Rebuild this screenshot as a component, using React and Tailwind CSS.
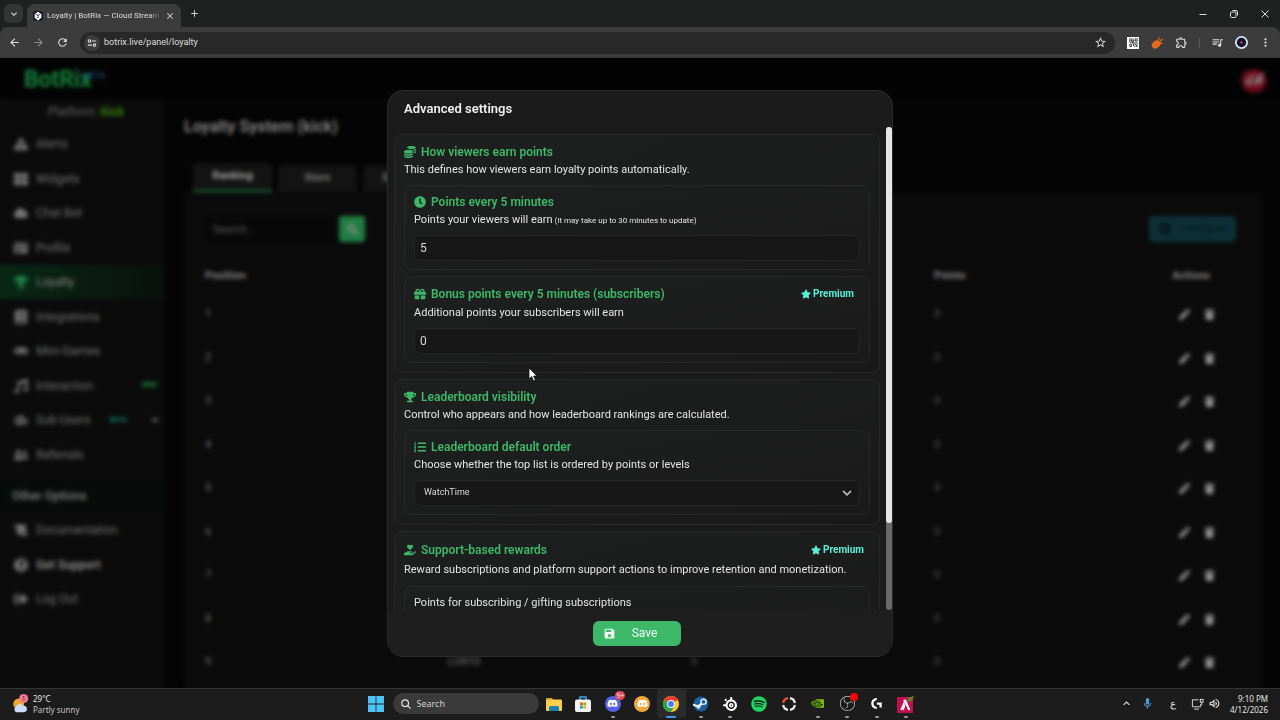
import React from "react";
import {
  FaExclamationTriangle, FaThLarge, FaCloud, FaIdCard, FaTrophy, FaBook, FaGamepad, FaMusic, FaUsersCog,
  FaUserFriends, FaScroll, FaQuestionCircle, FaSignOutAlt, FaCaretDown, FaClock, FaGift, FaListOl,
  FaHandHoldingHeart, FaStar, FaSearch, FaPen, FaTrash, FaCoins, FaSpotify, FaDiscord, FaCog,
} from "react-icons/fa";
import {
  MdArrowBack, MdArrowForward, MdRefresh, MdStarOutline, MdOutlineExtension, MdQueueMusic, MdMoreVert,
  MdClose, MdAdd, MdKeyboardArrowDown, MdKeyboardArrowUp, MdSave, MdOutlineMic, MdOutlineVolumeUp, MdQrCode2,
} from "react-icons/md";
import { SiObsstudio, SiSteelseries, SiNvidia, SiLogitechg } from "react-icons/si";

const NAV = [
  { label: "Alerts", Icon: FaExclamationTriangle },
  { label: "Widgets", Icon: FaThLarge },
  { label: "Chat Bot", Icon: FaCloud },
  { label: "Profile", Icon: FaIdCard },
  { label: "Loyalty", Icon: FaTrophy, active: true },
  { label: "Integrations", Icon: FaBook },
  { label: "Mini-Games", Icon: FaGamepad },
  { label: "Interaction", Icon: FaMusic, badge: "NEW", badgeClass: "ml-auto pr-2 text-[#22c55e]" },
  { label: "Sub-Users", Icon: FaUsersCog, badge: "BETA", badgeClass: "ml-auto text-[#14b88a]", caret: true },
  { label: "Referrals", Icon: FaUserFriends },
];

const OTHER = [
  { label: "Documentation", Icon: FaScroll },
  { label: "Get Support", Icon: FaQuestionCircle, strong: true },
  { label: "Log Out", Icon: FaSignOutAlt },
];

const ROWS = ["1", "2", "3", "4", "5", "6", "7", "8", "9"];

function BrowserChrome() {
  return (
    <header className="shrink-0 bg-[#1f2120] font-[Roboto,sans-serif] text-[#dedede]">
      <div className="flex h-[27px] items-end pl-1">
        <button aria-label="Search tabs" className="mb-1 grid size-[19px] place-items-center rounded-md bg-[#343635]">
          <MdKeyboardArrowDown className="size-3" />
        </button>
        <div className="ml-1 flex h-[23px] w-[154px] items-center rounded-t-lg bg-[#3c3c3c] px-1.5">
          <svg viewBox="0 0 12 12" className="size-[10px] shrink-0">
            <rect width="12" height="12" rx="3" fill="#151a30" />
            <path d="M2 4l4-3 4 3v4l-4 3.500-4-3.500z" fill="#fff" />
            <path d="M4 4l2 1.500 2-1.500M5 8.500l1.500-2" stroke="#151a30" strokeWidth="1.200" fill="none" />
          </svg>
          <span className="ml-1 min-w-0 flex-1 overflow-hidden text-[8px] whitespace-nowrap [mask-image:linear-gradient(90deg,#000_90%,transparent)]">
            Loyalty | BotRix — Cloud Stream
          </span>
          <button aria-label="Close tab" className="ml-1"><MdClose className="size-[10px]" /></button>
        </div>
        <button aria-label="New tab" className="mb-2 ml-2"><MdAdd className="size-[11px]" /></button>
        <div className="mb-2 ml-auto flex items-center gap-[21px] pr-2.5">
          <button aria-label="Minimize">
            <svg viewBox="0 0 10 10" className="size-[10px]"><path d="M1.500 5.500h7" stroke="currentColor" /></svg>
          </button>
          <button aria-label="Restore">
            <svg viewBox="0 0 10 10" className="size-[10px]" fill="none" stroke="currentColor">
              <rect x="1.500" y="3" width="5.500" height="5.500" rx="1" />
              <path d="M3.500 1.500h3.500a1.500 1.500 0 0 1 1.500 1.500v3.500" />
            </svg>
          </button>
          <button aria-label="Close">
            <svg viewBox="0 0 10 10" className="size-[10px]"><path d="M1.500 1.500l7 7M8.500 1.500l-7 7" stroke="currentColor" /></svg>
          </button>
        </div>
      </div>
      <div className="flex h-[31px] items-center rounded-t-lg bg-[#3c3c3c] px-2">
        <div className="flex items-center gap-[11px]">
          <button aria-label="Back"><MdArrowBack className="size-[13px]" /></button>
          <button aria-label="Forward" className="text-[#8a8a8a]"><MdArrowForward className="size-[13px]" /></button>
          <button aria-label="Reload"><MdRefresh className="size-[13px]" /></button>
        </div>
        <div className="ml-[11px] flex h-[22px] flex-1 items-center rounded-full bg-[#282828] pr-2 pl-1">
          <span className="grid size-4 place-items-center rounded-full bg-[#3c3c3c]">
            <svg viewBox="0 0 12 12" className="size-[10px]" fill="none" stroke="currentColor" strokeWidth="1.300">
              <circle cx="3" cy="3.500" r="1.500" /><path d="M6 3.500h5M1 8.500h5" /><circle cx="9" cy="8.500" r="1.500" />
            </svg>
          </span>
          <input aria-label="Address" defaultValue="botrix.live/panel/loyalty" className="ml-1 min-w-0 flex-1 bg-transparent text-[9px] outline-none" />
          <button aria-label="Bookmark"><MdStarOutline className="size-[13px]" /></button>
        </div>
        <div className="ml-3 flex items-center gap-3">
          <span className="grid size-[12px] place-items-center bg-white text-[#222]"><MdQrCode2 className="size-[11px]" /></span>
          <svg viewBox="0 0 12 12" className="size-[12px]">
            <ellipse cx="5" cy="7.500" rx="4.500" ry="3.700" transform="rotate(-40 5 7.500)" fill="#e8681c" />
            <path d="M7 3l1.500-2.500M8.500 4.500L11.500 2M9 6.500l2.500-.5" stroke="#e8681c" strokeWidth="1.300" />
          </svg>
          <MdOutlineExtension className="size-[13px]" />
        </div>
        <span className="mx-[11px] h-[10px] w-px bg-[#5c5c5c]" />
        <div className="flex items-center gap-[11px]">
          <MdQueueMusic className="size-[13px]" />
          <svg viewBox="0 0 14 14" className="size-[13px]">
            <circle cx="7" cy="7" r="7" fill="#d5e3f7" /><circle cx="7" cy="7" r="5" fill="#10122a" />
            <circle cx="7" cy="7" r="1.300" fill="#e0405a" />
          </svg>
          <button aria-label="Menu"><MdMoreVert className="size-[13px]" /></button>
        </div>
      </div>
    </header>
  );
}

function NavItem({ label, Icon, active, strong, badge, badgeClass, caret }) {
  return (
    <li className={"odd:h-[34px] even:h-[35px] " + (active ? "bg-gradient-to-r from-[#0b3a1f] to-[#0e1813]" : "")}>
      <a href="#" className={"flex h-full items-center pl-[14px] text-[12px] " + (strong ? "font-semibold text-[#c0c0c0]" : active ? "text-[#b8b8b8]" : "text-[#9c9c9c]")}>
        <Icon className={"size-[14px] shrink-0 " + (active ? "text-[#2cbc66]" : "text-[#acacac]")} />
        <span className="ml-2">{label}</span>
        {badge && <span className={"text-[7px] font-bold " + badgeClass}>{badge}</span>}
        {caret && <FaCaretDown className="mr-1 ml-[22px] size-3 shrink-0" />}
      </a>
    </li>
  );
}

function Sidebar() {
  return (
    <nav className="w-[165px] shrink-0 bg-[#111111]">
      <p className="mt-[3px] pl-12 text-[12px] leading-5 text-[#8a8a8a]">
        Platform: <b className="text-[#4cae10]">Kick</b>
      </p>
      <ul className="mt-[5px]">{NAV.map((n) => <NavItem key={n.label} {...n} />)}</ul>
      <h2 className="mt-2 bg-[#0b110e] pl-3 text-[12px] leading-[32px] font-semibold text-[#a4a4a4]">Other Options</h2>
      <ul className="mt-px">{OTHER.map((n) => <NavItem key={n.label} {...n} />)}</ul>
    </nav>
  );
}

function LoyaltyPage() {
  return (
    <main className="ml-[19px] flex min-w-0 flex-1 flex-col">
      <h1 className="mt-4 text-[16px] leading-6 font-semibold text-[#bcbcbc]">Loyalty System (kick)</h1>
      <div className="mt-6 flex items-end gap-1.5 pl-[9px] text-[11px] font-bold text-[#a4a4a4]">
        <button className="h-[29px] w-[79px] rounded-t border-b-2 border-[#22a052] bg-[#1c1c1c] text-[#dcdcdc]">Ranking</button>
        <button className="h-[27px] w-[79px] rounded-t bg-[#1c1c1c]">Store</button>
        <button className="h-[27px] w-[79px] rounded-t bg-[#1c1c1c]">Settings</button>
      </div>
      <section className="mr-[18px] flex-1 bg-[#101010] pt-6 pr-[26px] pl-[21px]">
        <div className="flex h-[26px] items-center">
          <input aria-label="Search viewers" placeholder="Search..." className="h-[25px] w-[134px] bg-[#0c0c0c] px-2 text-[11px] placeholder:text-[#7c7c7c]" />
          <button aria-label="Search" className="grid size-[26px] place-items-center rounded-sm bg-[#2fb262] text-[#d0d0d0]"><FaSearch className="size-[11px]" /></button>
          <button className="ml-auto flex h-[26px] w-[87px] items-center justify-center gap-2 rounded-sm bg-[#144550] text-[11px] text-[#0a2026]"><FaCog className="size-[14px]" />Configure</button>
        </div>
        <table className="mt-[17px] w-full table-fixed text-left text-[11px] text-[#787878]">
          <colgroup><col className="w-[243px]" /><col className="w-[243px]" /><col className="w-[243px]" /><col className="w-[243px]" /><col /></colgroup>
          <thead>
            <tr className="h-[34px] font-bold text-[#b4b4b4]">
              <th>Position</th><th>User</th><th>Level</th><th>Points</th>
              <th><span className="flex justify-end pr-[26px]">Actions</span></th>
            </tr>
          </thead>
          <tbody>
            {ROWS.map((r) => (
              <tr key={r} className="border-b border-[#161616] odd:h-[43px] even:h-[44px]">
                <td className="text-[#a0a0a0]">{r}</td>
                <td className="text-[#a8a8a8]">{r === "9" ? "LOR10" : ""}</td>
                <td>0</td><td>0</td>
                <td>
                  <span className="flex justify-end gap-[14px] pr-[21px] text-[#d4d4d4]">
                    <button aria-label="Edit"><FaPen className="size-[11px]" /></button>
                    <button aria-label="Delete"><FaTrash className="size-[11px]" /></button>
                  </span>
                </td>
              </tr>
            ))}
          </tbody>
        </table>
      </section>
    </main>
  );
}

function Premium() {
  return (
    <span className="ml-auto flex items-center gap-[2px] pr-1.5 text-[10px] font-bold text-[#55f0dc]">
      <FaStar className="size-[10px]" />Premium
    </span>
  );
}

function Group({ Icon, title, text, premium, children }) {
  return (
    <section className="flex flex-col rounded-lg border border-[#272927] bg-gradient-to-br from-[#1e201f] to-[#191919] px-[9px] pt-2 pb-[9px]">
      <h3 className={"flex items-center gap-[5px] text-[12px] font-semibold text-[#3cb868] " + (premium ? "h-[20px]" : "h-[18px]")}>
        <Icon className="size-[12px]" />{title}{premium && <Premium />}
      </h3>
      <p className={"text-[11px] text-[#e4e4e4] " + (premium ? "leading-[20px]" : "leading-[18px]")}>{text}</p>
      <div className="mt-1.5 flex flex-col gap-1.5">{children}</div>
    </section>
  );
}

function Setting({ id, Icon, title, label, note, premium, children }) {
  return (
    <div className="rounded-lg border border-[#272927] bg-gradient-to-br from-[#1e201f] to-[#1a1a1a] px-[9px] pt-[7px] pb-2">
      {title && (
        <h4 className={"flex items-center gap-[5px] text-[12px] font-semibold text-[#3cb868] " + (premium ? "h-[20px]" : "h-[18px]")}>
          <Icon className="size-[12px]" />{title}{premium && <Premium />}
        </h4>
      )}
      <label htmlFor={id} className="block text-[11px] leading-[18px] text-[#e4e4e4]">
        {label}{note && <span className="text-[8px] leading-none"> {note}</span>}
      </label>
      <div className="mt-1.5">{children}</div>
    </div>
  );
}

const FIELD = "block h-[26px] w-full rounded-md border border-[#242624] bg-[#171717] text-[#d8d8d8] outline-none";

function SettingsDialog() {
  return (
    <div role="dialog" aria-label="Advanced settings" className="flex h-[90%] w-[506px] flex-col overflow-hidden rounded-2xl border border-[#2a2c2b] bg-[#1b1b1b]">
      <h2 className="shrink-0 px-4 pt-2 pb-2 text-[13px] leading-5 font-semibold text-[#f0f0f0]">Advanced settings</h2>
      <div className="flex min-h-0 flex-1">
        <div className="flex min-w-0 flex-1 flex-col gap-1.5 overflow-y-auto pt-[7px] pr-1.5 pl-1.5 [scrollbar-width:none]">
          <Group Icon={FaCoins} title="How viewers earn points" text="This defines how viewers earn loyalty points automatically.">
            <Setting id="points" Icon={FaClock} title="Points every 5 minutes" label="Points your viewers will earn" note="(It may take up to 30 minutes to update)">
              <input id="points" defaultValue="5" className={FIELD + " px-[5px] text-[12px]"} />
            </Setting>
            <Setting id="bonus" Icon={FaGift} title="Bonus points every 5 minutes (subscribers)" label="Additional points your subscribers will earn" premium>
              <input id="bonus" defaultValue="0" className={FIELD + " px-[5px] text-[12px]"} />
            </Setting>
          </Group>
          <Group Icon={FaTrophy} title="Leaderboard visibility" text="Control who appears and how leaderboard rankings are calculated.">
            <Setting id="order" Icon={FaListOl} title="Leaderboard default order" label="Choose whether the top list is ordered by points or levels">
              <div className="grid items-center">
                <select id="order" className={FIELD + " col-start-1 row-start-1 appearance-none px-[9px] text-[9px]"}><option>WatchTime</option></select>
                <svg viewBox="0 0 10 6" className="pointer-events-none col-start-1 row-start-1 mr-2 h-[6px] w-[10px] justify-self-end text-[#b4b4b4]" fill="none" stroke="currentColor" strokeWidth="1.800">
                  <path d="M1 .8l4 4 4-4" />
                </svg>
              </div>
            </Setting>
          </Group>
          <Group Icon={FaHandHoldingHeart} title="Support-based rewards" text="Reward subscriptions and platform support actions to improve retention and monetization." premium>
            <Setting id="subs" label="Points for subscribing / gifting subscriptions">
              <input id="subs" className={FIELD + " px-[5px] text-[12px]"} />
            </Setting>
          </Group>
        </div>
        <div className="w-[6px] rounded-full bg-[#686868]"><div className="h-[82%] rounded-full bg-[#e6e6e6]" /></div>
      </div>
      <div className="flex shrink-0 justify-center bg-[#1e1e1e] pt-[11px] pr-1.5 pb-[10px]">
        <button className="flex h-[25px] w-[88px] items-center rounded-md bg-[#3cb868] pl-[10px] text-[12px] text-[#eefaf2]">
          <MdSave className="size-[13px]" /><span className="flex-1 pr-2 text-center">Save</span>
        </button>
      </div>
    </div>
  );
}

function TaskIcon({ children, running, active }) {
  return (
    <button aria-label="Application" className={"relative grid h-[29px] flex-1 place-items-center rounded " + (active ? "bg-[#2b2b2b]" : "")}>
      {children}
      {running && <span className={"absolute bottom-0 h-[2px] rounded-full " + (active ? "w-[10px] bg-[#3f9cf0]" : "w-1 bg-[#9a9a9a]")} />}
    </button>
  );
}

function Taskbar() {
  return (
    <footer className="flex h-8 shrink-0 items-center border-t border-[#343434] bg-[#1c1c1c] pb-0.5 font-['Noto_Sans','Open_Sans',sans-serif] text-[#e6e6e6]">
      <div className="flex flex-1 items-center gap-1 pl-3 text-[8px] leading-[11px]">
        <svg viewBox="0 0 18 22" className="h-[20px] w-[17px]">
          <circle cx="7" cy="11" r="6" fill="#f2a52e" />
          <path d="M4 20a3.500 3.500 0 0 1 0-6 4.500 4.500 0 0 1 8-1 3.500 3.500 0 0 1 1 7z" fill="#c9dcf8" />
          <circle cx="12.500" cy="5" r="5" fill="#f07a8c" />
          <text x="12.500" y="7.500" textAnchor="middle" fontSize="7" fill="#222">1</text>
        </svg>
        <p>29°C<br /><span className="text-[#c4c4c4]">Partly sunny</span></p>
      </div>
      <div className="flex items-center pl-1">
        <button aria-label="Start" className="grid w-6 place-items-center">
          <svg viewBox="0 0 16 16" className="size-4" fill="#4cc2f5"><path d="M0 0h7.600v7.600H0zM8.400 0H16v7.600H8.400zM0 8.400h7.600V16H0zM8.400 8.400H16V16H8.400z" /></svg>
        </button>
        <label className="mr-px ml-[5px] flex h-[21px] w-[146px] items-center gap-1.5 rounded-full bg-[#3a3a3a] px-2">
          <svg viewBox="0 0 12 12" className="size-[10px] shrink-0" fill="none" stroke="currentColor" strokeWidth="1.400"><circle cx="5" cy="5" r="4" /><path d="M8 8l3.500 3.500" /></svg>
          <input aria-label="Search" placeholder="Search" className="w-full min-w-0 bg-transparent text-[9px] outline-none placeholder:text-[#cfcfcf]" />
        </label>
        <div className="flex w-[381px]">
          <TaskIcon><svg viewBox="0 0 16 14" className="h-[14px] w-[16px]"><path d="M0 1h6l1.500 2H0z" fill="#d9920f" /><rect y="2.500" width="16" height="11.500" rx="1" fill="#fbd04e" /><path d="M3 14v-3.500q0-1.500 1.500-1.500h7q1.500 0 1.500 1.500V14z" fill="#1b7fb8" /></svg></TaskIcon>
          <TaskIcon><svg viewBox="0 0 16 16" className="size-4"><path d="M5 4V1h6v3" stroke="#35a8e8" strokeWidth="1.500" fill="none" /><rect y="3.500" width="16" height="12.500" rx="2" fill="#f2f2f2" /><path d="M5 6.500h2.800v2.800H5z" fill="#f25022" /><path d="M8.300 6.500h2.800v2.800H8.300z" fill="#7fba00" /><path d="M5 9.800h2.800v2.800H5z" fill="#00a4ef" /><path d="M8.300 9.800h2.800v2.800H8.300z" fill="#ffb900" /></svg></TaskIcon>
          <TaskIcon running>
            <span className="grid size-4 place-items-center rounded-full bg-[#5460e6] text-white"><FaDiscord className="size-[11px]" /></span>
            <span className="absolute top-0.5 right-0.5 rounded-full bg-[#e04858] px-px text-[7px] leading-[9px]">9+</span>
          </TaskIcon>
          <TaskIcon><span className="grid size-4 place-items-center rounded-full bg-[#efa63a] text-white"><FaDiscord className="size-[11px]" /></span></TaskIcon>
          <TaskIcon running active>
            <svg viewBox="0 0 16 16" className="size-4">
              <circle cx="8" cy="8" r="8" fill="#fbc52d" />
              <path d="M8 8L1.070 4A8 8 0 0 1 14.930 4z" fill="#e8402f" /><path d="M8 8L1.070 4A8 8 0 0 0 8 16l3.400-6z" fill="#2da34f" />
              <circle cx="8" cy="8" r="4" fill="#fff" /><circle cx="8" cy="8" r="3" fill="#3f80ee" />
            </svg>
          </TaskIcon>
          <TaskIcon running>
            <svg viewBox="0 0 16 16" className="size-4">
              <path d="M1 5a7.500 7.500 0 1 1 0 6z" fill="#1c5f9e" />
              <path d="M0 8.500l5 2 4-3" stroke="#e8f0f8" strokeWidth="2.400" fill="none" />
              <circle cx="10.500" cy="5.800" r="2.600" fill="#1c5f9e" stroke="#e8f0f8" strokeWidth="1.400" />
              <circle cx="5.500" cy="10.800" r="2" fill="#e8f0f8" />
            </svg>
          </TaskIcon>
          <TaskIcon running><SiSteelseries className="size-[14px] text-white" /></TaskIcon>
          <TaskIcon><FaSpotify className="size-4 text-[#1ed760]" /></TaskIcon>
          <TaskIcon>
            <svg viewBox="0 0 16 16" className="size-4" fill="none" strokeWidth="2.200">
              <path d="M9 2.100a6 6 0 0 1 4.900 4.900M13.900 9a6 6 0 0 1-4.900 4.900M7 13.900a6 6 0 0 1-4.900-4.900" stroke="#f0f0f0" />
              <path d="M2.100 7a6 6 0 0 1 4.900-4.900" stroke="#e8552f" />
            </svg>
          </TaskIcon>
          <TaskIcon running><SiNvidia className="size-[13px] text-[#76b900]" /></TaskIcon>
          <TaskIcon running>
            <SiObsstudio className="size-[15px] text-[#c8c8c8]" />
            <span className="absolute top-1 right-1 size-[8px] rounded-full bg-[#f00]" />
          </TaskIcon>
          <TaskIcon running><SiLogitechg className="size-[11px] text-white" /></TaskIcon>
          <TaskIcon running>
            <svg viewBox="0 0 18 18" className="size-[18px]">
              <path d="M0 2h16v16H0z" fill="#c0104f" />
              <path d="M4 15l4-9 4 9M6.500 5.500h2l4 9.500M8 9.500L6 15" stroke="#fff" strokeWidth="1.600" fill="none" />
              <path d="M10 3l7-2-2 5-4 1z" fill="#6d7a2c" />
            </svg>
          </TaskIcon>
        </div>
      </div>
      <div className="flex flex-1 items-center justify-end pr-3">
        <MdKeyboardArrowUp className="size-[13px]" />
        <MdOutlineMic className="ml-2 size-[13px] text-[#4a9ee8]" />
        <span className="ml-4 text-[10px]">ع</span>
        <svg viewBox="0 0 14 12" className="ml-[15px] h-[12px] w-[13px]" fill="none" stroke="currentColor">
          <path d="M8 1.500H1.500v7.500h9V6M3.500 11.500h5" /><rect x="10" y="1" width="3" height="3" /><path d="M11.500 4v3" />
        </svg>
        <MdOutlineVolumeUp className="ml-1 size-[13px]" />
        <p className="ml-[9px] text-right text-[8px] leading-[11px]">9:10 PM<br />4/12/2026</p>
      </div>
    </footer>
  );
}

export default function App() {
  return (
    <div className="flex h-screen flex-col overflow-hidden bg-black font-[Roboto,sans-serif]">
      <BrowserChrome />
      <div className="relative flex min-h-0 flex-1 flex-col overflow-hidden bg-[#060606]">
        <div className="flex h-[41px] shrink-0 items-center bg-[#050505] pt-1 pr-3 pl-6">
          <span className="text-[23px] font-semibold text-[#22c55e]">BotRix</span>
          <sup className="-ml-2 text-[9px] text-[#2f8fc4]">BETA</sup>
          <svg viewBox="0 0 28 26" className="ml-auto h-[26px] w-[28px]">
            <path d="M4 4l10-3 10 3 3 10-5 9-10 2-8-4-3-9z" fill="#a0122c" />
            <path d="M5 16l4-8 8-1-1 2-5 1-2 3h6l4-6 5-2-2 4 1 4-5 4-4-2-4 2z" fill="#b8a8a8" />
          </svg>
        </div>
        <div className="flex min-h-0 flex-1"><Sidebar /><LoyaltyPage /></div>
        <div className="absolute inset-0 flex items-center justify-center bg-black/30 backdrop-blur-[2px]">
          <SettingsDialog />
          <svg viewBox="0 0 10 15" className="absolute top-[309px] left-[528px] h-[15px] w-[10px]">
            <path d="M1 1v11l2.700-2.400L5.500 14l2-.9-1.900-4H9z" fill="#fff" stroke="#111" strokeWidth=".8" />
          </svg>
        </div>
      </div>
      <Taskbar />
    </div>
  );
}
